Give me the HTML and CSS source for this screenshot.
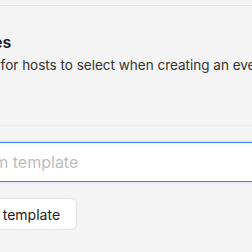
FILE: index.html
```html
<!DOCTYPE html>
<html lang="en">
<head>
<meta charset="utf-8">
<link rel="stylesheet" href="styles.css">
</head>
<body>
<div class="topbar"></div>
<main class="panel">
  <section class="intro">
    <h2 class="title">Templates</h2>
    <p class="desc">Templates for hosts to select when creating an event.</p>
  </section>
  <section class="form">
    <input class="field" type="text" placeholder="Custom template">
    <button class="btn" type="button">
      <svg class="btn-icon" width="16" height="16" viewBox="0 0 16 16" fill="none" stroke="#222" stroke-width="1.5" stroke-linecap="round"><path d="M8 3v10M3 8h10"/></svg>
      <span>Add template</span>
    </button>
  </section>
</main>
</body>
</html>
```
FILE: styles.css
```css
* { box-sizing: border-box; }
html, body {
  margin: 0;
  padding: 0;
  background: #f4f4f4;
  font-family: Inter, "Noto Sans", sans-serif;
  color: #1f1f1f;
  overflow: hidden;
}
.topbar {
  height: 6px;
  border-bottom: 1px solid #e4e4e4;
}
.panel {
  margin-left: -69px;
  width: 600px;
}
.intro {
  padding-top: 24px;
  padding-bottom: 50px;
  border-bottom: 1px solid #ebebeb;
}
.title {
  margin: 0;
  font-size: 16px;
  line-height: 24px;
  font-weight: 600;
  color: #1a1a1a;
}
.desc {
  margin: 1px 0 0;
  font-size: 13.5px;
  line-height: 20px;
  color: #333;
}
.form {
  padding-top: 16px;
  display: flex;
  flex-direction: column;
  align-items: flex-start;
  gap: 16px;
}
.field {
  width: 100%;
  height: 40px;
  padding: 0 18px;
  border: 1px solid #3b82f6;
  border-radius: 6px;
  background: #fff;
  font-family: inherit;
  font-size: 16px;
  outline: none;
  box-shadow: 0 0 0 2px rgba(59,130,246,0.08);
}
.field::placeholder { color: #bdbdbd; }
.btn {
  display: flex;
  align-items: center;
  gap: 8px;
  height: 32px;
  padding: 0 16px;
  border: 1px solid #e2e2e2;
  border-radius: 6px;
  background: #fff;
  font-family: inherit;
  font-size: 14px;
  color: #222;
}
.btn-icon { flex: none; }
```
